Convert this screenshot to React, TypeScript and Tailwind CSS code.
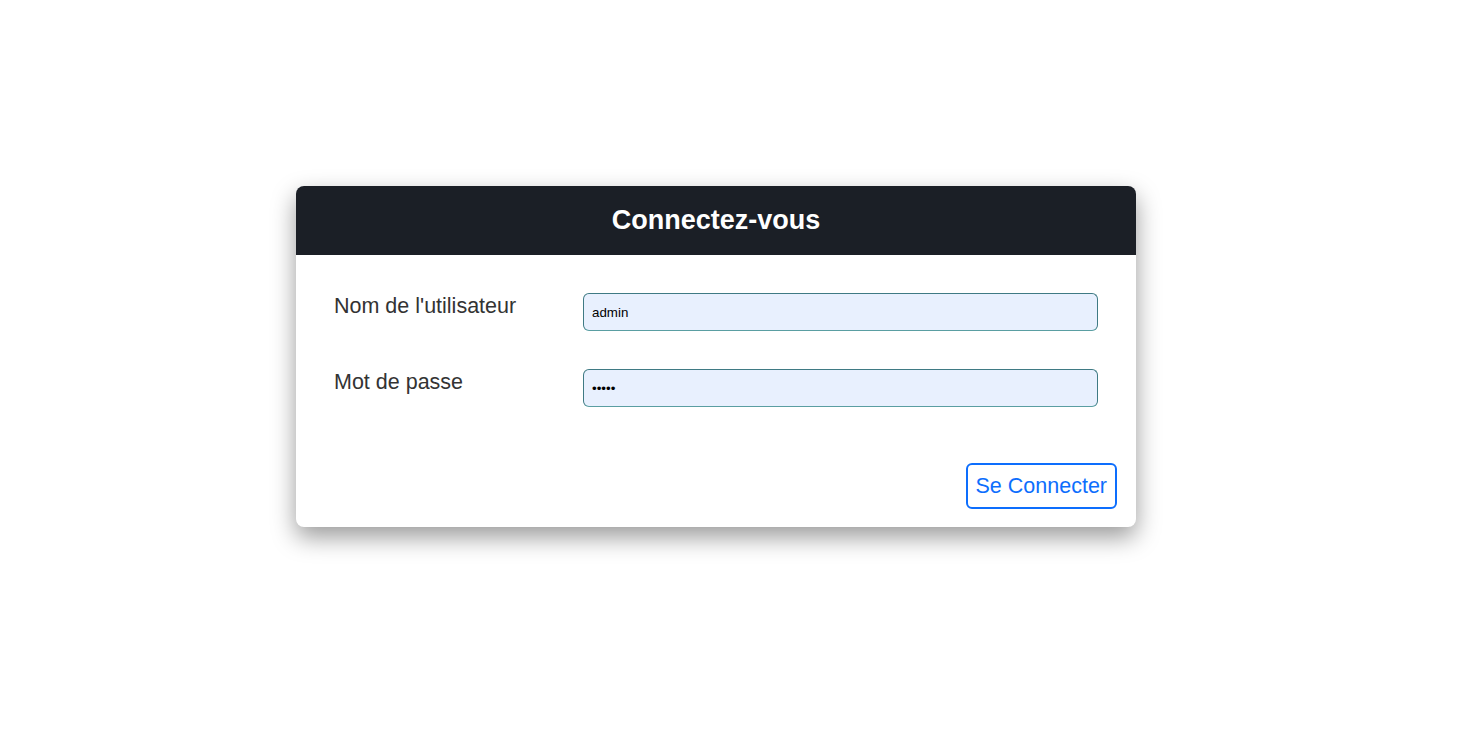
export default function App() {
  return (
    <div className="min-h-[736px] w-full bg-white pt-[186px] font-['Liberation_Sans',Arial,sans-serif]">
      <div className="ml-[296px] w-[840px] rounded-lg bg-white shadow-[0_10px_24px_rgba(0,0,0,0.4)]">
        <div className="flex h-[69px] items-center justify-center rounded-t-lg bg-[#1b1f26]">
          <h1 className="text-[27px] font-bold text-white">Connectez-vous</h1>
        </div>
        <form className="px-[38px] pt-[38px]" onSubmit={(e) => e.preventDefault()}>
          <div className="flex">
            <label htmlFor="user" className="w-[249px] pt-px text-[21.5px] leading-[25px] text-[#333]">
              Nom de l'utilisateur
            </label>
            <input
              id="user"
              defaultValue="admin"
              className="h-[38px] flex-1 rounded-md border border-[#3f7a84] border-b-[#5a9ea2] bg-[#e8f0fe] px-2 text-[13.33px] text-black outline-none"
            />
          </div>
          <div className="mt-[38px] flex">
            <label htmlFor="pass" className="w-[249px] pt-px text-[21.5px] leading-[25px] text-[#333]">
              Mot de passe
            </label>
            <input
              id="pass"
              type="password"
              defaultValue="admin"
              className="h-[38px] flex-1 rounded-md border border-[#3f7a84] border-b-[#5a9ea2] bg-[#e8f0fe] px-2 text-[13.33px] text-black outline-none"
            />
          </div>
          <div className="-mr-[19px] flex justify-end pb-[18px] pt-[56px]">
            <button
              type="submit"
              className="h-[46px] rounded-md border-2 border-[#0d6efd] bg-white px-[8px] text-[21.5px] text-[#0d6efd]"
            >
              Se Connecter
            </button>
          </div>
        </form>
      </div>
    </div>
  );
}
